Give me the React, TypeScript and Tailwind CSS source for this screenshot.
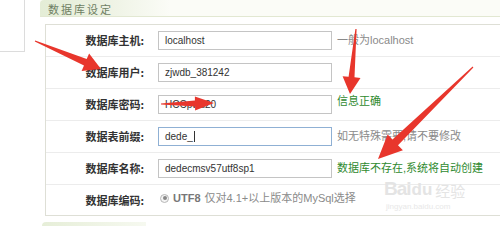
import React from 'react';

type Row = {
    label: string;
    value?: string;
    hint?: string;
    ok?: boolean;
    focused?: boolean;
};

const ROWS: Row[] = [
    { label: '数据库主机:', value: 'localhost', hint: '一般为localhost' },
    { label: '数据库用户:', value: 'zjwdb_381242' },
    { label: '数据库密码:', value: 'HCCpwd20', hint: '信息正确', ok: true },
    { label: '数据表前缀:', value: 'dede_', hint: '如无特殊需要,请不要修改', focused: true },
    { label: '数据库名称:', value: 'dedecmsv57utf8sp1', hint: '数据库不存在,系统将自动创建', ok: true },
];

// red "tutorial" arrow: thin tail widening into a head
const arrowPoints = (x1: number, y1: number, x2: number, y2: number, headLen: number, headW: number, bodyW: number) => {
    const dx = x2 - x1;
    const dy = y2 - y1;
    const len = Math.hypot(dx, dy);
    const ux = dx / len;
    const uy = dy / len;
    const nx = -uy;
    const ny = ux;
    const bx = x2 - ux * headLen;
    const by = y2 - uy * headLen;
    const pts = [
        [x1 + nx * 0.6, y1 + ny * 0.6],
        [bx + nx * bodyW / 2, by + ny * bodyW / 2],
        [bx + nx * headW / 2, by + ny * headW / 2],
        [x2, y2],
        [bx - nx * headW / 2, by - ny * headW / 2],
        [bx - nx * bodyW / 2, by - ny * bodyW / 2],
        [x1 - nx * 0.6, y1 - ny * 0.6],
    ];
    return pts.map(p => `${p[0].toFixed(1)},${p[1].toFixed(1)}`).join(' ');
};

const Arrows = () => (
    <svg className="absolute inset-0 pointer-events-none" width="500" height="226" xmlns="http://www.w3.org/2000/svg">
        <polygon points={arrowPoints(35, 41, 101, 69, 17, 19, 7)} fill="#e8362c" />
        <polygon points={arrowPoints(161, 104, 214, 103, 19, 14, 6)} fill="#e8362c" />
        <polygon points={arrowPoints(356, 29, 350, 94, 17, 18, 6)} fill="#e8362c" />
        <polygon points={arrowPoints(473, 67, 378, 159, 24, 22, 8)} fill="#e8362c" />
    </svg>
);

export default function App() {
    return (
        <div className="relative w-[500px] h-[226px] overflow-hidden bg-white flex font-['Liberation_Sans','Noto_Sans_CJK_SC',sans-serif]">
            {/* left sidebar stub */}
            <div className="w-[25px] shrink-0">
                <div className="h-[52px] border-r border-b border-[#dcdcdc]" />
            </div>

            <div className="ml-[15px] flex-1 flex flex-col">
                {/* section header */}
                <div className="h-[17px] border-b border-[#e2e8d2] bg-[#fbfcf7] flex">
                    <div className="w-[130px] h-full rounded-tl-[4px] bg-gradient-to-r from-[#e4edd6] via-[#edf2e3] to-[#fbfcf7] pl-[8px] flex items-center">
                        <span className="text-[11px] tracking-[2px] text-[#6f7f63] mt-[2px] font-['Noto_Sans_CJK_SC',sans-serif]">数据库设定</span>
                    </div>
                </div>

                {/* settings table */}
                <div className="mt-[7px] ml-[5px] w-[470px] border border-[#dedfd6] flex flex-col">
                    {ROWS.map((row, i) => (
                        <div key={i} className="h-[32px] flex items-center border-b border-[#ececec]">
                            <div className="w-[98px] text-right text-[11px] font-bold text-[#333] font-['Noto_Sans_CJK_SC',sans-serif]">
                                {row.label}
                            </div>
                            <div
                                className={`ml-[14px] w-[174px] h-[19px] border bg-white flex items-center pl-[6px] text-[10px] text-[#333] ${row.focused ? 'border-[#8fb0d4]' : 'border-[#c4c4c4]'}`}
                            >
                                {row.value}
                                {row.focused && <span className="w-px h-[11px] bg-[#333] ml-[1px]" />}
                            </div>
                            {row.hint && (
                                <div className={`ml-[5px] text-[11px] ${row.ok ? 'text-[#2f8a2f]' : 'text-[#8a8a8a]'} ${i === 2 ? '-mt-[6px]' : ''}`}>
                                    {row.hint}
                                </div>
                            )}
                        </div>
                    ))}
                    <div className="h-[30px] flex items-center">
                        <div className="w-[98px] text-right text-[11px] font-bold text-[#333] font-['Noto_Sans_CJK_SC',sans-serif]">
                            数据库编码:
                        </div>
                        <div className="ml-[16px] flex items-center -mt-[4px] text-[11px] text-[#8a8a8a]">
                            <span className="w-[9px] h-[9px] rounded-full border border-[#b8b8b8] bg-[#f4f4f4] flex items-center justify-center">
                                <span className="w-[4px] h-[4px] rounded-full bg-[#888]" />
                            </span>
                            <span className="ml-[4px] font-bold text-[#777]">UTF8</span>
                            <span className="ml-[4px]">仅对4.1+以上版本的MySql选择</span>
                        </div>
                    </div>
                </div>

                {/* next section header, cut off */}
                <div className="mt-[6px] ml-[2px] w-[104px] h-[6px] rounded-tl-[4px] bg-gradient-to-r from-[#e6eed8] to-[#f6f9f0]" />
            </div>

            {/* baidu watermark */}
            <div className="absolute left-[384px] top-[179px] flex flex-col items-start text-[#e4e4e4] select-none pointer-events-none">
                <div className="flex items-end leading-none">
                    <span className="text-[19px] font-bold tracking-[-1px]">Bai</span>
                    <span className="text-[17px] font-bold ml-[1px]">du</span>
                    <span className="text-[15px] ml-[3px] font-['Noto_Sans_CJK_SC',sans-serif]">经验</span>
                </div>
                <span className="text-[8px] leading-none mt-[5px] ml-[2px] text-[#e8e8e8]">jingyan.baidu.com</span>
            </div>

            <Arrows />
        </div>
    );
}
